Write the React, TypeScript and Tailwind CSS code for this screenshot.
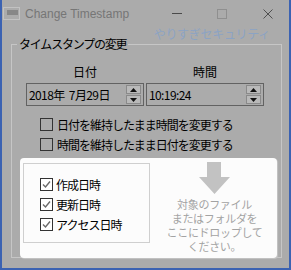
import React from "react";

const jp = "font-['Noto_Sans_CJK_JP',sans-serif]";

function Check({ checked, white }: { checked?: boolean; white?: boolean }) {
  return (
    <div
      className={`w-[13px] h-[13px] border border-[#333333] flex items-center justify-center ${
        white ? "bg-white" : ""
      }`}
    >
      {checked && (
        <svg width="11" height="11" viewBox="0 0 11 11">
          <path d="M2 5.5 L4.5 8 L9 2.5" fill="none" stroke="#6a6a6a" strokeWidth="1.4" />
        </svg>
      )}
    </div>
  );
}

function Spin() {
  return (
    <div className="flex flex-col gap-[1px] mr-[2px]">
      <div className="w-[15px] h-[9px] bg-[#b9b9b9] border border-[#8a8a8a] flex items-center justify-center">
        <svg width="7" height="4" viewBox="0 0 7 4">
          <path d="M0 4 L3.5 0 L7 4 Z" fill="#111" />
        </svg>
      </div>
      <div className="w-[15px] h-[9px] bg-[#b9b9b9] border border-[#8a8a8a] flex items-center justify-center">
        <svg width="7" height="4" viewBox="0 0 7 4">
          <path d="M0 0 L7 0 L3.5 4 Z" fill="#111" />
        </svg>
      </div>
    </div>
  );
}

function Field({ value }: { value: string }) {
  return (
    <div className="w-[118px] h-[23px] border border-[#626262] flex items-center">
      <span className={`flex-1 pl-[2px] whitespace-pre text-[12px] leading-[14px] tracking-[-0.6px] text-black ${jp}`}>
        {value}
      </span>
      <Spin />
    </div>
  );
}

export default function App() {
  return (
    <div className={`w-[291px] h-[270px] bg-[#ababab] border-x-2 border-b-2 border-[#3b62b2] flex flex-col ${jp}`}>
      {/* Title bar */}
      <div className="h-[27px] flex items-center">
        <div className="ml-[1px] w-[17px] h-[13px] border border-[#c2c2c2] flex flex-col pt-[2px] pl-[3px] pr-[1px]">
          <div className="h-[5px] bg-[#878787]" />
        </div>
        <span className="ml-[5px] text-[12px] leading-[16px] text-[#767676] font-['Liberation_Sans',sans-serif]">
          Change Timestamp
        </span>
        <div className="ml-auto flex items-center">
          <div className="w-[10px] h-[1px] bg-[#4a4a4a]" />
          <div className="ml-[35px] w-[10px] h-[10px] border border-[#8f8f8f]" />
          <svg className="ml-[36px] mr-[16px]" width="10" height="10" viewBox="0 0 10 10">
            <path d="M0.5 0.5 L9.5 9.5 M9.5 0.5 L0.5 9.5" stroke="#4f4f4f" strokeWidth="1" />
          </svg>
        </div>
      </div>

      {/* Brand */}
      <div className="h-[14px] flex justify-end pr-[19px]">
        <span className="shrink-0 whitespace-nowrap text-[12px] leading-[14px] tracking-[-0.3px] text-[#8ba3c4]">
          やりすぎセキュリティ
        </span>
      </div>

      {/* Group box */}
      <div className="relative mt-[3px] ml-[9px] mr-[7px] h-[214px] border border-[#c6c6c6] flex flex-col">
        <span className="absolute top-[-8px] left-[5px] px-[2px] bg-[#ababab] text-[12px] leading-[14px] tracking-[-1.2px] text-black">
          タイムスタンプの変更
        </span>

        <div className="pt-[19px] pl-[14px] flex gap-[2px]">
          <div className="w-[118px] flex flex-col items-center">
            <span className="text-[12px] leading-[16px] text-black">日付</span>
            <div className="mt-[3px]">
              <Field value={"2018年  7月29日"} />
            </div>
          </div>
          <div className="w-[118px] flex flex-col items-center">
            <span className="text-[12px] leading-[16px] text-black">時間</span>
            <div className="mt-[3px]">
              <Field value="10:19:24" />
            </div>
          </div>
        </div>

        <div className="mt-[12px] pl-[28px] flex flex-col gap-[7px]">
          <div className="flex items-center gap-[4px] h-[13px]">
            <Check />
            <span className="text-[12px] leading-[14px] tracking-[-1px] text-black">日付を維持したまま時間を変更する</span>
          </div>
          <div className="flex items-center gap-[4px] h-[13px]">
            <Check />
            <span className="text-[12px] leading-[14px] tracking-[-1px] text-black">時間を維持したまま日付を変更する</span>
          </div>
        </div>

        {/* Drop panel */}
        <div className="mt-[7px] mb-[-1px] ml-[8px] w-[257px] h-[100px] bg-[#fcfcfc] rounded-[4px] shadow-[1px_1px_1px_#c4c4c4] flex p-[5px_0_0_3px]">
          <div className="w-[127px] h-[80px] border border-[#cfcfcf] pt-[14px] pl-[16px] flex flex-col gap-[7px]">
            <div className="flex items-center gap-[3px] h-[13px]">
              <Check checked white />
              <span className="text-[12px] leading-[14px] tracking-[-1px] text-black">作成日時</span>
            </div>
            <div className="flex items-center gap-[3px] h-[13px]">
              <Check checked white />
              <span className="text-[12px] leading-[14px] tracking-[-1px] text-black">更新日時</span>
            </div>
            <div className="flex items-center gap-[3px] h-[13px]">
              <Check checked white />
              <span className="text-[12px] leading-[14px] tracking-[-1px] text-black">アクセス日時</span>
            </div>
          </div>
          <div className="flex-1 flex flex-col items-center">
            <svg className="mt-[-1px] ml-[2px]" width="31" height="32" viewBox="0 0 31 32">
              <path d="M8 0 H22 V15 H31 L15.5 32 L0 15 H8 Z" fill="#c2c2c2" />
            </svg>
            <div className="mt-[3px] ml-[2px] flex flex-col items-center text-[11px] tracking-[-0.3px] text-[#a3a3a3]">
              <span className="block h-[14px] leading-[14px]">対象のファイル</span>
              <span className="block h-[14px] leading-[14px]">またはフォルダを</span>
              <span className="block h-[14px] leading-[14px]">ここにドロップして</span>
              <span className="block h-[14px] leading-[14px]">ください。</span>
            </div>
          </div>
        </div>
      </div>
    </div>
  );
}
